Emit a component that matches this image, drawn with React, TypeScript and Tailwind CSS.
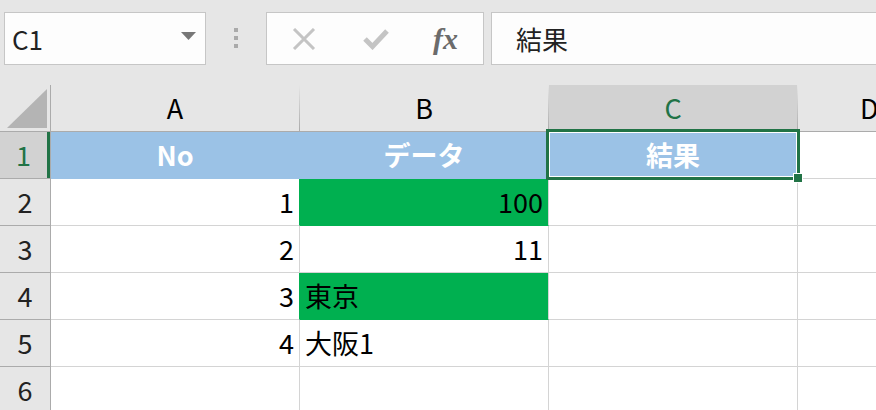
import React from "react";

const FONT = { fontFamily: '"Noto Sans CJK JP", "Noto Sans", sans-serif' };

type Cell = { text?: string; align?: "l" | "r" | "c"; fill?: "green" | "blue" };

const rows: Cell[][] = [
  [
    { text: "No", align: "c", fill: "blue" },
    { text: "データ", align: "c", fill: "blue" },
    { text: "結果", align: "c", fill: "blue" },
  ],
  [{ text: "1", align: "r" }, { text: "100", align: "r", fill: "green" }, {}],
  [{ text: "2", align: "r" }, { text: "11", align: "r" }, {}],
  [{ text: "3", align: "r" }, { text: "東京", align: "l", fill: "green" }, {}],
  [{ text: "4", align: "r" }, { text: "大阪1", align: "l" }, {}],
  [{}, {}, {}],
];

function cellClass(c: Cell, next?: Cell) {
  let bg = "bg-white";
  let bb = "border-b-[#d4d4d4]";
  let br = "border-r-[#d4d4d4]";
  if (c.fill === "blue") {
    bg = "bg-[#9bc2e6] text-white font-bold";
    bb = "border-b-[#9bc2e6]";
    br = "border-r-[#9bc2e6]";
  } else if (c.fill === "green") {
    bg = "bg-[#00b050]";
    bb = "border-b-[#00b050]";
  }
  if (next?.fill === "green") br = "border-r-[#00b050]";
  const align =
    c.align === "r" ? "justify-end pr-[5px]" : c.align === "c" ? "justify-center" : "justify-start pl-[5px]";
  return `flex items-center h-[47px] border-b border-r ${bg} ${bb} ${br} ${align}`;
}

function Toolbar() {
  return (
    <div className="flex h-[85px] items-start bg-[#e6e6e6] pt-[12px]">
      <div className="ml-[4px] flex h-[53px] w-[202px] items-center justify-between border border-[#c6c6c6] bg-[#fdfdfd] pl-[7px] pr-[9px]">
        <span className="text-[26px] text-[#222]">C1</span>
        <svg width="15" height="8" viewBox="0 0 15 8" className="mb-[6px]">
          <path d="M0 0 H15 L7.5 8 Z" fill="#777" />
        </svg>
      </div>
      <div className="flex w-[60px] flex-col items-center gap-[4px] pt-[16px]">
        <div className="h-[4px] w-[4px] bg-[#aaa]" />
        <div className="h-[4px] w-[4px] bg-[#aaa]" />
        <div className="h-[4px] w-[4px] bg-[#aaa]" />
      </div>
      <div className="flex h-[53px] w-[218px] items-center border border-[#c6c6c6] bg-[#fdfdfd]">
        <svg width="24" height="22" viewBox="0 0 24 22" className="ml-[25px]">
          <path d="M2 1 L22 21 M22 1 L2 21" stroke="#c4c4c4" strokeWidth="3" />
        </svg>
        <svg width="26" height="22" viewBox="0 0 26 22" className="ml-[47px]">
          <path d="M2 11 L9.5 18.5 L24 3" stroke="#c4c4c4" strokeWidth="5" fill="none" />
        </svg>
        <span
          className="ml-[44px] text-[30px] font-bold italic leading-none text-[#6b6b6b]"
          style={{ fontFamily: '"Liberation Serif", serif' }}
        >
          fx
        </span>
      </div>
      <div className="ml-[7px] flex h-[53px] flex-1 items-center border border-r-0 border-[#c6c6c6] bg-[#fdfdfd] pl-[24px]">
        <span className="text-[26px] text-[#222]">結果</span>
      </div>
    </div>
  );
}

export default function App() {
  return (
    <div className="h-[410px] w-[876px] overflow-hidden bg-white text-[27px] text-black" style={FONT}>
      <Toolbar />
      {/* column headers */}
      <div className="flex h-[47px] border-b border-[#ababab] bg-[#e6e6e6]">
        <div className="flex w-[51px] shrink-0 items-end justify-end border-r border-[#ababab] pb-[3px] pr-[3px]">
          <svg width="40" height="39" viewBox="0 0 40 39">
            <path d="M40 0 V39 H0 Z" fill="#b4b4b4" />
          </svg>
        </div>
        {["A", "B", "C"].map((l) => (
          <div key={l} className="flex shrink-0">
            <div
              className={`flex w-[248px] items-center justify-center ${
                l === "C" ? "bg-[#d2d2d2] text-[#217346]" : "text-black"
              }`}
            >
              {l}
            </div>
            <div className="w-px bg-gradient-to-b from-[#e6e6e6] to-[#ababab]" />
          </div>
        ))}
        <div className="flex flex-1 items-center pl-[62px]">D</div>
      </div>
      {/* body */}
      <div className="relative">
        {rows.map((r, i) => (
          <div key={i} className="flex">
            <div
              className={`flex h-[47px] w-[51px] shrink-0 items-center border-b border-r border-[#ababab] ${
                i === 0 ? "bg-[#d2d2d2] text-[#217346]" : "bg-[#e6e6e6] text-[#222]"
              }`}
            >
              <span className="flex-1 text-center">{i + 1}</span>
              {i === 0 && <div className="h-full w-[3px] shrink-0 bg-[#217346]" />}
            </div>
            {r.map((c, j) => (
              <div key={j} className={`w-[249px] shrink-0 ${cellClass(c, r[j + 1])}`}>
                {c.text}
              </div>
            ))}
            <div className="h-[47px] flex-1 border-b border-[#d4d4d4] bg-white" />
          </div>
        ))}
        {/* selection */}
        <div className="absolute left-[546px] top-[-3px] h-[51px] w-[254px] border-[3px] border-[#217346]">
          <div className="h-full w-full border border-white" />
          <div className="absolute right-[-6px] bottom-[-6px] h-[10px] w-[10px] border border-white bg-[#217346]" />
        </div>
      </div>
    </div>
  );
}
